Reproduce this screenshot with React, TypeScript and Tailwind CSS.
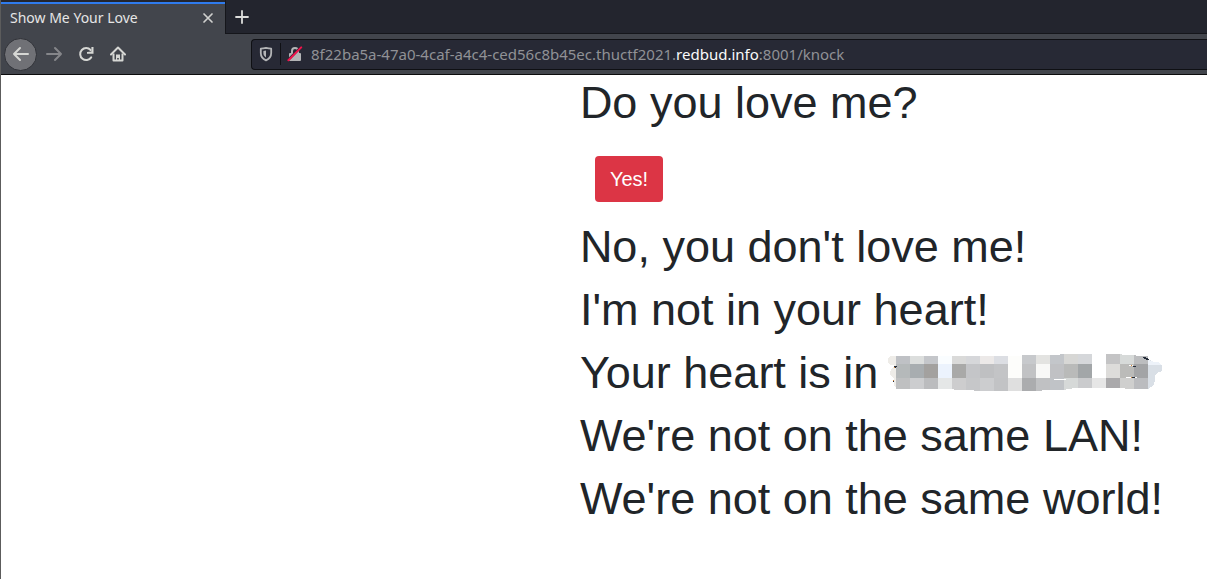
const messages = [
  "No, you don't love me!",
  "I'm not in your heart!",
];

const closing = [
  "We're not on the same LAN!",
  "We're not on the same world!",
];

const mosaic = [
  {
    y: 0,
    height: 10,
    colors: ["#bfc1c5", "#dcdedd", "#c4c6ca", "#fafdff", "#dadad9", "#d6d7da", "#ece9e8", "#dcdee3", "#fdfdfb", "#c7c9cc", "#e3e3e1", "#c3c6ca", "#d7d7d5", "#d5d7da", "#ffffff", "#c4c4c5", "#d7dad9", "#bcbdbf"],
  },
  {
    y: 10,
    height: 14,
    colors: ["#b5b9ba", "#a8adb0", "#a3a19f", "#ecf3fd", "#a9a9a8", "#c4c5c8", "#bfc0c2", "#c3c4c6", "#fdfdfb", "#c1c2c4", "#f8f8f7", "#c0c1c4", "#b9bab9", "#a2a6a8", "#ffffff", "#dddcda", "#bbbbb9", "#a3a4a6"],
  },
  {
    y: 24,
    height: 13,
    colors: ["#bfc0c1", "#cccdcf", "#bbbcbe", "#e5e7e7", "#cdcdce", "#c6c7c9", "#cccdcf", "#c2c3c5", "#dfdfdf", "#abacae", "#c0c1c3", "#c0c3c7", "#d6d9d8", "#cacbcd", "#e6e6e6", "#aaa9ab", "#cfcfce", "#bbbcbf"],
  },
];

const Mosaic = () => (
  <svg width="275" height="38" viewBox="0 0 275 38" shapeRendering="crispEdges" aria-hidden="true">
    <defs>
      <clipPath id="smear">
        <path d="M8 2H134V1H148V1H172V0H204V0H234V1H248V2H260V35H237V34H204V34H184V35H178V36H154V37H86V36H66V35H8Z" />
      </clipPath>
    </defs>
    <path d="M8 2H3L0 4V8L2 11H6V13L3 15L2 20L4 23L6 24V32L8 33Z" fill="#eeece8" />
    <path d="M256 5L262 6L266 8H270L274 11V17L269 19L267 21V27L265 32L260 35H256Z" fill="#d9dfe6" />
    <path d="M260 6L266 8H270L274 11H260Z" fill="#edf2f9" />
    <g clipPath="url(#smear)">
      {mosaic.map((row) =>
        row.colors.map((color, i) => (
          <rect key={`${row.y}-${i}`} x={8 + i * 14} y={row.y} width="14" height={row.height} fill={color} />
        ))
      )}
    </g>
    <path d="M166 25H178V26H166ZM241 11H245V12H241ZM238 23H249V24H238Z" fill="#fff" />
    <path d="M6 12H9V13H8V14H6ZM5 27H6V28H5ZM255 3H258V4H260V5H261V6H258V5H256V4H255ZM245 12H248V13H245ZM244 23H247V24H244Z" fill="#252d3a" />
    <path d="M6 13H7V14H6ZM5 26H6V27H5ZM243 11H244V12H243ZM243 23H244V24H243Z" fill="#d18439" />
  </svg>
);

const TabStrip = () => (
  <div className="flex h-[34px] bg-[#23252e]">
    <div className="flex w-[225px] flex-col border-r border-[#15161b] pt-[2px]">
      <div className="h-[2px] bg-[#2f7bee]" />
      <div className="flex flex-1 items-center justify-between bg-[#42454c] pb-[2px] pl-[9px] pr-[11px]">
        <span className="text-sm leading-5 text-[#e6e6e6]">Show Me Your Love</span>
        <button type="button" aria-label="Close tab" className="text-[#d0d1cf]">
          <svg width="12" height="12" viewBox="0 0 12 12" fill="none" stroke="currentColor" strokeWidth="1.7" strokeLinecap="round">
            <path d="M2 2L10 10M10 2L2 10" />
          </svg>
        </button>
      </div>
    </div>
    <div className="flex flex-1 items-center border-b border-[#15161b] pl-2">
      <button type="button" aria-label="New tab" className="text-[#dcdddb]">
        <svg width="16" height="16" viewBox="0 0 16 16" fill="none" stroke="currentColor" strokeWidth="1.8" strokeLinecap="round">
          <path d="M8 2V14M2 8H14" />
        </svg>
      </button>
    </div>
  </div>
);

const Toolbar = () => (
  <div className="flex h-[41px] items-center border-b border-[#0c0c0d] bg-[#42454c] pl-[3px] text-[#d6d7d4]">
    <button type="button" aria-label="Back" className="flex size-[33px] items-center justify-center rounded-full border border-[#303238] bg-[#707176]">
      <svg width="18" height="16" viewBox="0 0 18 16" fill="none" stroke="currentColor" strokeWidth="2" strokeLinecap="round" strokeLinejoin="round">
        <path d="M16 8H2M8 2L2 8L8 14" />
      </svg>
    </button>
    <button type="button" aria-label="Forward" className="ml-2 text-[#85868a]">
      <svg width="18" height="16" viewBox="0 0 18 16" fill="none" stroke="currentColor" strokeWidth="2" strokeLinecap="round" strokeLinejoin="round">
        <path d="M2 8H16M10 2L16 8L10 14" />
      </svg>
    </button>
    <button type="button" aria-label="Reload" className="ml-[15px]">
      <svg width="16" height="16" viewBox="0 0 16 16" fill="none" stroke="currentColor" strokeWidth="2">
        <path d="M13.2 11.4A6 6 0 1 1 12.6 4" strokeLinecap="round" />
        <path d="M15.5 1V7.8H9V6L13.4 5.6V1Z" fill="currentColor" stroke="none" />
      </svg>
    </button>
    <button type="button" aria-label="Home" className="ml-4">
      <svg width="16" height="16" viewBox="0 0 16 16" fill="none" stroke="currentColor" strokeWidth="2" strokeLinejoin="round">
        <path d="M1 8.5L8 1.5L15 8.5" strokeLinecap="round" />
        <path d="M3.5 7.5V14.5H12.5V7.5" />
        <path d="M6 8.5H10V14H8.8V12H7.2V14H6Z" fill="currentColor" stroke="none" />
      </svg>
    </button>
    <div className="ml-[125px] flex h-[31px] flex-1 items-center rounded-l border border-r-0 border-[#0f1014] bg-[#272935] pl-[6px]">
      <button type="button" aria-label="Tracking protection" className="text-[#b3b4b6]">
        <svg width="16" height="16" viewBox="0 0 16 16" fill="none">
          <path d="M8 1.8C10 2.3 12 2.6 13.2 2.7V7C13.2 10.5 11.5 12.8 8 14.3C4.5 12.8 2.8 10.5 2.8 7V2.7C4 2.6 6 2.3 8 1.8Z" stroke="currentColor" strokeWidth="1.8" strokeLinejoin="round" />
          <path d="M8 4.4V11.4C6.2 10.3 5.4 9 5.4 7V4.9Z" fill="currentColor" />
        </svg>
      </button>
      <div className="ml-[6px] h-[22px] w-px bg-[#0f1014]" />
      <button type="button" aria-label="Connection is not secure" className="ml-[6px] text-[#b3b4b6]">
        <svg width="16" height="16" viewBox="0 0 16 16" fill="none">
          <path d="M5 8V5A3 3 0 0 1 11 5V8" stroke="currentColor" strokeWidth="2" />
          <rect x="2" y="7" width="12" height="8" rx="1" fill="currentColor" />
          <path d="M2.4 12.6L13 2" stroke="#272935" strokeWidth="2.4" />
          <path d="M1.4 14.2L14.2 1.4" stroke="#f0124b" strokeWidth="2" strokeLinecap="round" />
        </svg>
      </button>
      <p className="ml-2 flex-1 whitespace-nowrap text-[15px] leading-5 text-[#909196]">
        8f22ba5a-47a0-4caf-a4c4-ced56c8b45ec.thuctf2021.<span className="text-[#f9f9fa]">redbud.info</span>:8001/knock
      </p>
    </div>
  </div>
);

const App = () => {
  return (
    <div className="min-h-screen border-l border-[#5c5c5c] bg-white">
      <header className="font-['Noto_Sans',sans-serif]">
        <TabStrip />
        <Toolbar />
      </header>

      <main className="pl-[48%] pt-px font-['Liberation_Sans',Arial,sans-serif] text-[45px] leading-[54px] text-[#212529]">
        <h1 className="whitespace-nowrap">Do you love me?</h1>
        <button type="button" className="mt-[26px] mb-[18px] ml-[15px] block rounded bg-[#dc3545] px-[15px] py-2 text-xl leading-[30px] text-white">
          Yes!
        </button>
        {messages.map((text) => (
          <h1 key={text} className="mb-[9px] whitespace-nowrap">{text}</h1>
        ))}
        <h1 className="mb-[9px] flex items-center gap-[10px] whitespace-nowrap">
          Your heart is in <Mosaic />
        </h1>
        {closing.map((text) => (
          <h1 key={text} className="mb-[9px] whitespace-nowrap">{text}</h1>
        ))}
      </main>
    </div>
  );
};

export default App;
